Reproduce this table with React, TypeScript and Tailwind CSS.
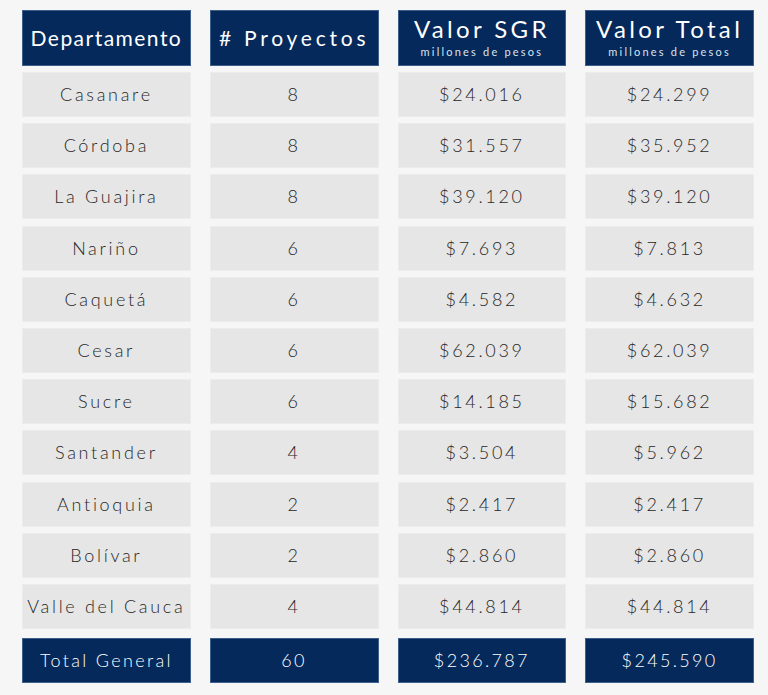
const ROWS = [
  ["Casanare", "8", "$24.016", "$24.299"],
  ["Córdoba", "8", "$31.557", "$35.952"],
  ["La Guajira", "8", "$39.120", "$39.120"],
  ["Nariño", "6", "$7.693", "$7.813"],
  ["Caquetá", "6", "$4.582", "$4.632"],
  ["Cesar", "6", "$62.039", "$62.039"],
  ["Sucre", "6", "$14.185", "$15.682"],
  ["Santander", "4", "$3.504", "$5.962"],
  ["Antioquia", "2", "$2.417", "$2.417"],
  ["Bolívar", "2", "$2.860", "$2.860"],
  ["Valle del Cauca", "4", "$44.814", "$44.814"],
];

const TOTAL = ["Total General", "60", "$236.787", "$245.590"];

const navy = "flex items-center justify-center border border-[#3d5f8c] bg-[#05295b] text-white";

export default function App() {
  return (
    <div
      className="h-[695px] w-[768px] bg-[#f6f6f6] pt-[10px] pl-[22px]"
      style={{ fontFamily: "Lato, 'Open Sans', sans-serif" }}
    >
      <div className="grid w-[732px] grid-cols-4 gap-x-[19px]">
        <div className={`${navy} h-[56px] text-[21px] tracking-[0.07em]`}>Departamento</div>
        <div className={`${navy} h-[56px] text-[21px] tracking-[0.18em]`}># Proyectos</div>
        {["Valor SGR", "Valor Total"].map((t) => (
          <div key={t} className={`${navy} h-[56px] flex-col pb-[2px] leading-none`}>
            <span className="text-[24px] tracking-[0.14em]">{t}</span>
            <span className="mt-[5px] text-[11px] tracking-[0.2em] text-[#dbe3ee]">millones de pesos</span>
          </div>
        ))}
      </div>

      <div className="mt-[6px] grid w-[732px] grid-cols-4 gap-x-[19px] gap-y-[6.2px]">
        {ROWS.map((row) =>
          row.map((cell, i) => (
            <div
              key={row[0] + i}
              className="flex h-[45px] items-center justify-center border border-[#ececec] bg-[#e6e6e6] text-[18px] font-light tracking-[0.15em] text-[#262626]"
            >
              {cell}
            </div>
          ))
        )}
      </div>

      <div className="mt-[9px] grid w-[732px] grid-cols-4 gap-x-[19px]">
        {TOTAL.map((cell) => (
          <div key={cell} className={`${navy} h-[45px] text-[18px] font-light tracking-[0.13em] text-[#d6e0ee]`}>
            {cell}
          </div>
        ))}
      </div>
    </div>
  );
}
